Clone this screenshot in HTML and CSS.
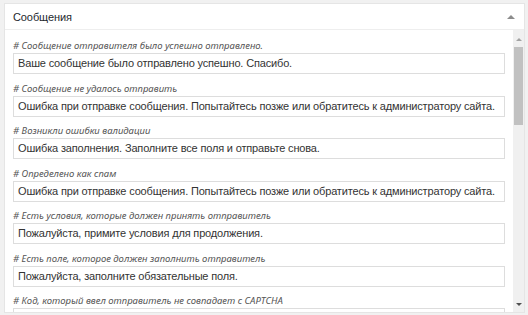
FILE: index.html
```html
<!DOCTYPE html>
<html lang="ru">
<head>
<meta charset="utf-8">
<title>Сообщения</title>
<link rel="stylesheet" href="styles.css">
</head>
<body>
<div class="panel">
  <div class="panel-head">
    <span class="panel-title">Сообщения</span>
    <span class="toggle"></span>
  </div>
  <div class="panel-body">
    <div class="fields">
      <div class="row">
        <div class="label"># Сообщение отправителя было успешно отправлено.</div>
        <div class="input">Ваше сообщение было отправлено успешно. Спасибо.</div>
      </div>
      <div class="row">
        <div class="label"># Сообщение не удалось отправить</div>
        <div class="input">Ошибка при отправке сообщения. Попытайтесь позже или обратитесь к администратору сайта.</div>
      </div>
      <div class="row">
        <div class="label"># Возникли ошибки валидации</div>
        <div class="input">Ошибка заполнения. Заполните все поля и отправьте снова.</div>
      </div>
      <div class="row">
        <div class="label"># Определено как спам</div>
        <div class="input">Ошибка при отправке сообщения. Попытайтесь позже или обратитесь к администратору сайта.</div>
      </div>
      <div class="row">
        <div class="label"># Есть условия, которые должен принять отправитель</div>
        <div class="input">Пожалуйста, примите условия для продолжения.</div>
      </div>
      <div class="row">
        <div class="label"># Есть поле, которое должен заполнить отправитель</div>
        <div class="input">Пожалуйста, заполните обязательные поля.</div>
      </div>
      <div class="row">
        <div class="label"># Код, который ввел отправитель не совпадает с CAPTCHA</div>
        <div class="input"></div>
      </div>
    </div>
    <div class="scrollbar">
      <span class="arrow up"></span>
      <span class="thumb"></span>
      <span class="spacer"></span>
      <span class="arrow down"></span>
    </div>
  </div>
</div>
</body>
</html>
```
FILE: styles.css
```css
html, body {
  margin: 0;
  padding: 0;
}
body {
  background: #f1f1f1;
  font-family: "Liberation Sans", Arial, sans-serif;
  color: #333;
  padding: 3px 4px 0 4px;
  height: 315px;
  box-sizing: border-box;
  overflow: hidden;
}
.panel {
  width: 521px;
  height: 310px;
  box-sizing: border-box;
  background: #fff;
  border: 1px solid #e5e5e5;
  display: flex;
  flex-direction: column;
}
.panel-head {
  height: 25px;
  border-bottom: 1px solid #eeeeee;
  display: flex;
  align-items: center;
  justify-content: space-between;
  padding: 0 9px 0 8px;
  flex: none;
}
.panel-title {
  font-size: 11px;
  letter-spacing: -0.1px;
  color: #23282d;
}
.toggle {
  width: 0;
  height: 0;
  border-left: 4px solid transparent;
  border-right: 4px solid transparent;
  border-bottom: 4px solid #8c8c8c;
  margin-top: 1px;
}
.panel-body {
  flex: 1;
  display: flex;
  min-height: 0;
}
.fields {
  flex: 1;
  overflow: hidden;
  padding: 9px 8px 0 8px;
}
.row {
  margin-bottom: 7.5px;
}
.label {
  font-family: "Noto Sans", "Liberation Sans", sans-serif;
  font-size: 9.5px;
  font-style: italic;
  color: #555;
  line-height: 13px;
  margin-bottom: 1px;
  white-space: nowrap;
}
.input {
  height: 21px;
  box-sizing: border-box;
  border: 1px solid #dddddd;
  font-size: 11px;
  letter-spacing: -0.16px;
  line-height: 19px;
  padding: 0 4px;
  color: #333;
  white-space: nowrap;
  overflow: hidden;
}
.scrollbar {
  width: 11px;
  flex: none;
  background: #f0f0f0;
  display: flex;
  flex-direction: column;
  align-items: center;
  padding: 8px 0 6px;
}
.arrow {
  width: 0;
  height: 0;
  border-left: 3px solid transparent;
  border-right: 3px solid transparent;
}
.arrow.up {
  border-bottom: 3px solid #a3a3a3;
}
.arrow.down {
  border-top: 3px solid #505050;
}
.thumb {
  width: 9px;
  height: 78px;
  background: #c1c1c1;
  margin-top: 6px;
}
.spacer {
  flex: 1;
}
```
